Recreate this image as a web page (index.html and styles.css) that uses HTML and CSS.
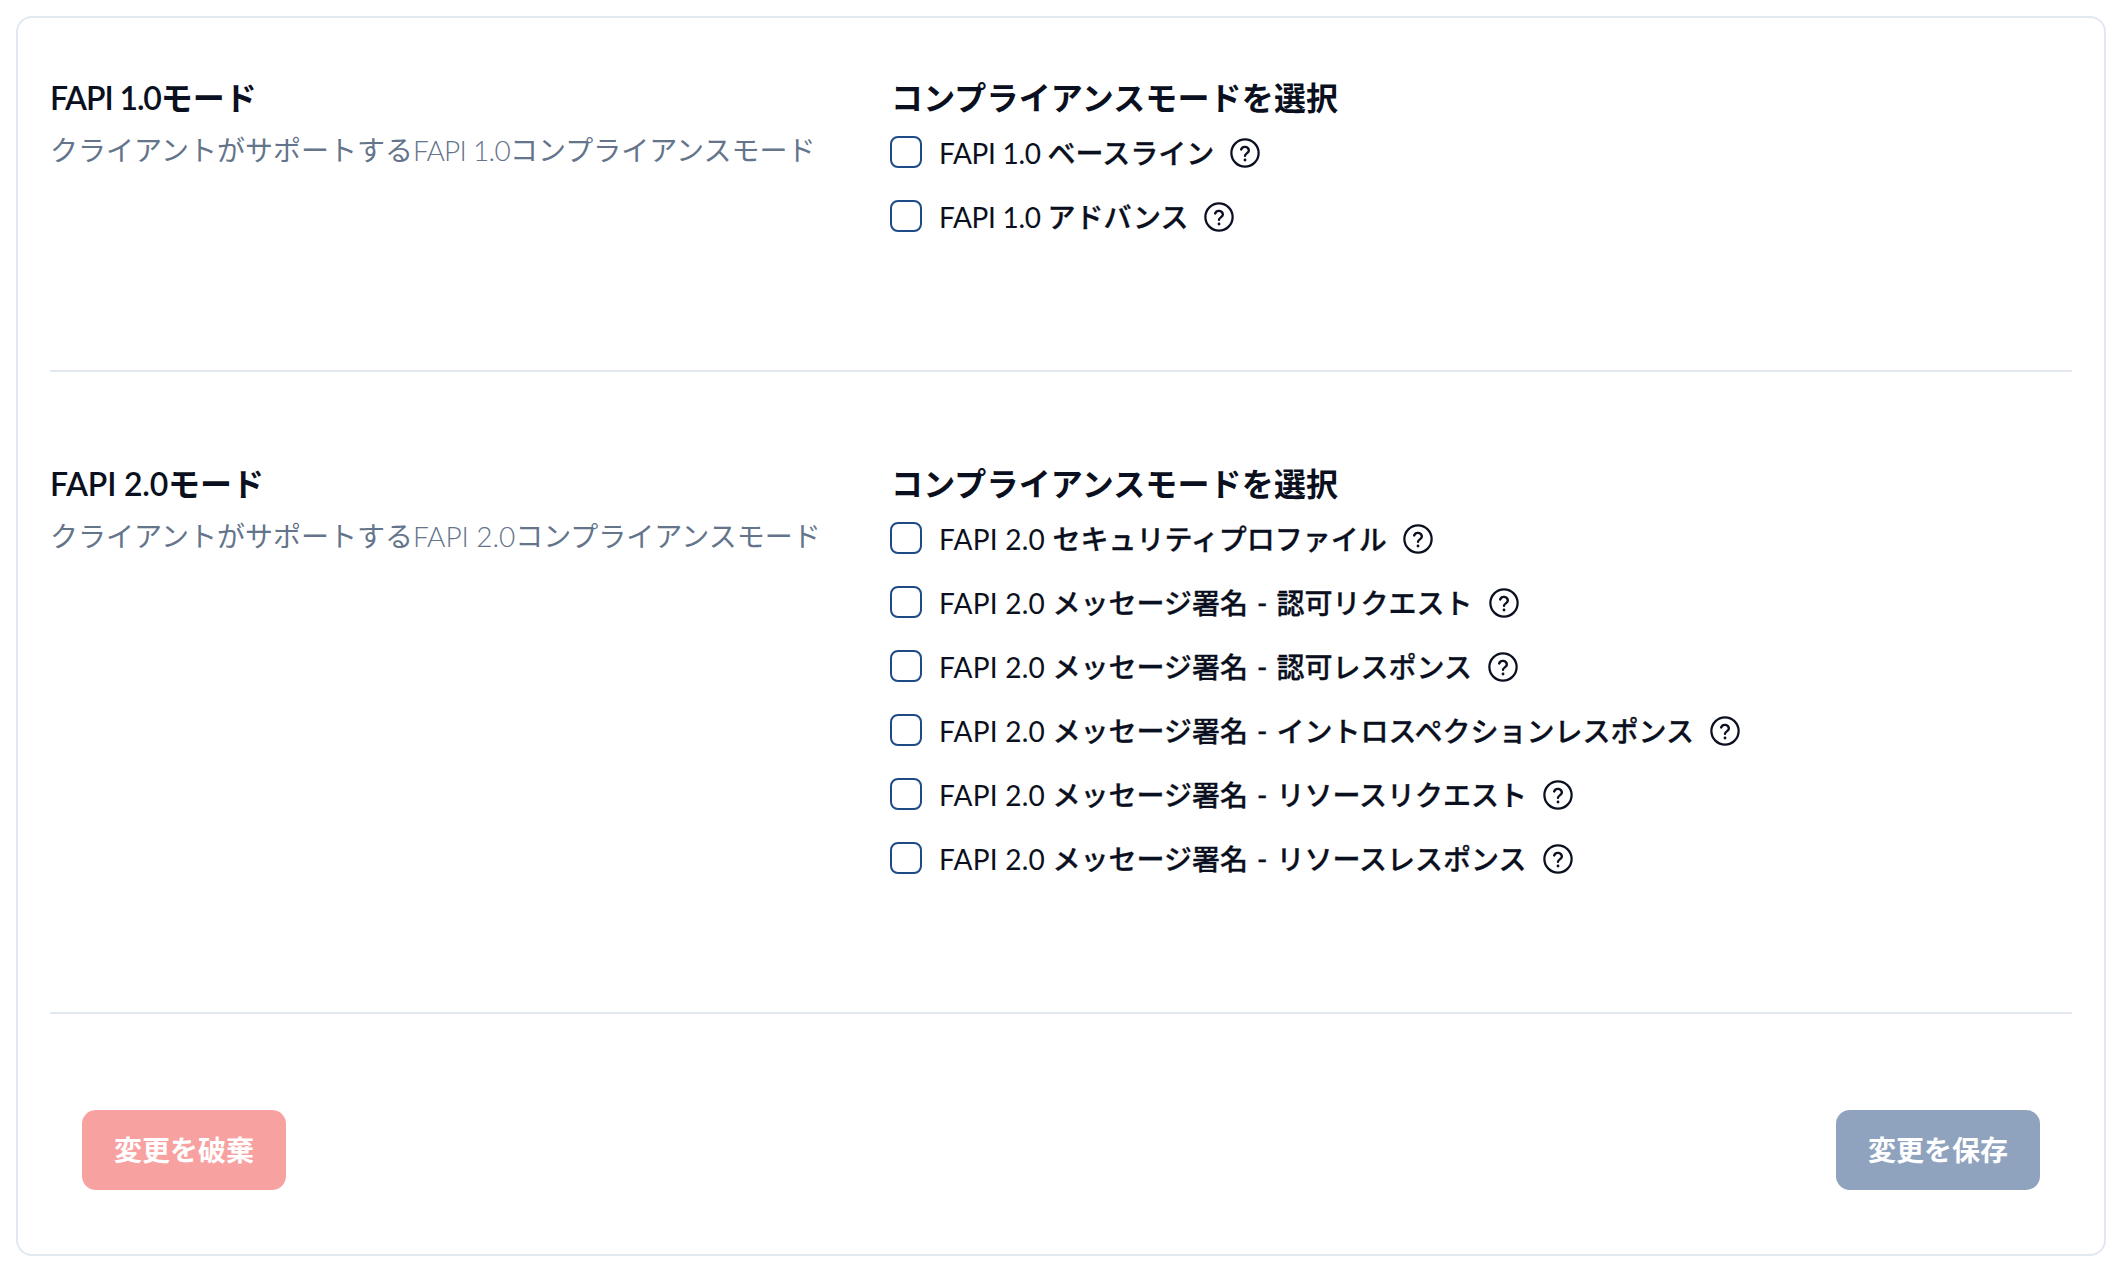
FILE: index.html
```html
<!DOCTYPE html>
<html lang="ja">
<head>
<meta charset="utf-8">
<title>FAPI</title>
<link rel="stylesheet" href="styles.css">
</head>
<body>
<svg class="sprite" width="0" height="0" aria-hidden="true"><symbol id="help" viewBox="0 0 24 24"><circle cx="12" cy="12" r="10.9" fill="none" stroke="currentColor" stroke-width="1.8"/><path d="M8.9 9.2a3.2 3.2 0 0 1 6.2.8c0 2.1-3.1 2.4-3.1 4.2" fill="none" stroke="currentColor" stroke-width="1.9" stroke-linecap="round"/><circle cx="12" cy="17.6" r="1.15" fill="currentColor"/></symbol></svg>
<main class="card">
  <section class="section section-first">
    <div class="intro">
      <h2 class="title"><span class="tight">FAPI 1.0</span>モード</h2>
      <p class="desc"><span>クライアントがサポートする</span><span class="thin-one">FAPI 1.0</span><span>コンプライアンスモード</span></p>
    </div>
    <div class="options">
      <h3 class="title title-select">コンプライアンスモードを選択</h3>
      <label class="option"><span class="box"></span><span class="text"><span class="wide-one">FAPI 1.0 </span>ベースライン</span><svg class="help"><use href="#help"/></svg></label>
      <label class="option"><span class="box"></span><span class="text"><span class="wide-one">FAPI 1.0 </span>アドバンス</span><svg class="help"><use href="#help"/></svg></label>
    </div>
  </section>
  <section class="section section-second">
    <div class="intro">
      <h2 class="title"><span class="loose">FAPI 2.0</span>モード</h2>
      <p class="desc"><span>クライアントがサポートする</span><span class="thin-two">FAPI 2.0</span><span>コンプライアンスモード</span></p>
    </div>
    <div class="options">
      <h3 class="title title-select">コンプライアンスモードを選択</h3>
      <label class="option"><span class="box"></span><span class="text"><span class="wide">FAPI 2.0 </span>セキュリティプロファイル</span><svg class="help"><use href="#help"/></svg></label>
      <label class="option"><span class="box"></span><span class="text"><span class="wide">FAPI 2.0 </span>メッセージ署名 - 認可リクエスト</span><svg class="help"><use href="#help"/></svg></label>
      <label class="option"><span class="box"></span><span class="text"><span class="wide">FAPI 2.0 </span>メッセージ署名 - 認可レスポンス</span><svg class="help"><use href="#help"/></svg></label>
      <label class="option"><span class="box"></span><span class="text"><span class="wide">FAPI 2.0 </span>メッセージ署名 - イントロスペクションレスポンス</span><svg class="help"><use href="#help"/></svg></label>
      <label class="option"><span class="box"></span><span class="text"><span class="wide">FAPI 2.0 </span>メッセージ署名 - リソースリクエスト</span><svg class="help"><use href="#help"/></svg></label>
      <label class="option"><span class="box"></span><span class="text"><span class="wide">FAPI 2.0 </span>メッセージ署名 - リソースレスポンス</span><svg class="help"><use href="#help"/></svg></label>
    </div>
  </section>
  <footer class="actions">
    <button class="btn btn-discard" type="button">変更を破棄</button>
    <button class="btn btn-save" type="button">変更を保存</button>
  </footer>
</main>
</body>
</html>
```
FILE: styles.css
```css
* { box-sizing: border-box; }
html, body { margin: 0; background: #fff; }
body {
  padding: 16px;
  font-family: "Lato", "Noto Sans CJK JP", sans-serif;
  color: #0b1020;
}
.sprite { position: absolute; }
.card {
  height: 1240px;
  border: 2px solid #e2e8f0;
  border-radius: 16px;
  padding: 0 32px;
}
.section {
  display: flex;
  border-bottom: 2px solid #e2e8f0;
}
.section-first {
  padding-top: 60px;
  height: 354px;
}
.section-second {
  padding-top: 92px;
  height: 642px;
}
.intro { width: 840px; flex: none; }
.title {
  margin: 0;
  font-size: 32px;
  line-height: 40px;
  font-weight: 600;
}
.title-select { letter-spacing: 0.15px; padding-left: 1px; }
.tight { letter-spacing: -1.1px; }
.loose { letter-spacing: -0.2px; }
.desc {
  margin: 12px 0 0;
  font-size: 28px;
  line-height: 40px;
  font-weight: 400;
  color: #64748b;
}
.thin-one { letter-spacing: -0.7px; font-weight: 300; }
.thin-two { letter-spacing: -0.05px; font-weight: 300; }
.options { flex: 1; }
.option {
  display: flex;
  align-items: center;
  height: 64px;
  gap: 16px;
}
.title + .option { margin-top: 3px; }
.box {
  width: 32px;
  height: 32px;
  margin-top: -2px;
  border: 2px solid #1e4a86;
  border-radius: 8px;
}
.text {
  font-size: 28px;
  font-weight: 500;
  line-height: 40px;
  word-spacing: 2px;
  padding-left: 1px;
  -webkit-text-stroke: 0.3px #0b1020;
}
.wide, .wide-one {
  font-weight: 400;
  word-spacing: 0;
  -webkit-text-stroke: 0;
}
.wide { letter-spacing: 0.25px; }
.wide-one { letter-spacing: -0.3px; }
.help { width: 30px; height: 30px; color: #0b1020; }
.actions {
  display: flex;
  justify-content: space-between;
  padding: 96px 32px 0;
}
.btn {
  width: 204px;
  height: 80px;
  padding: 0 0 2px;
  border: 0;
  border-radius: 14px;
  color: #fff;
  font: 600 28px "Lato", "Noto Sans CJK JP", sans-serif;
}
.btn-discard { background: #f7a1a1; }
.btn-save { background: #8fa3bf; }
```
